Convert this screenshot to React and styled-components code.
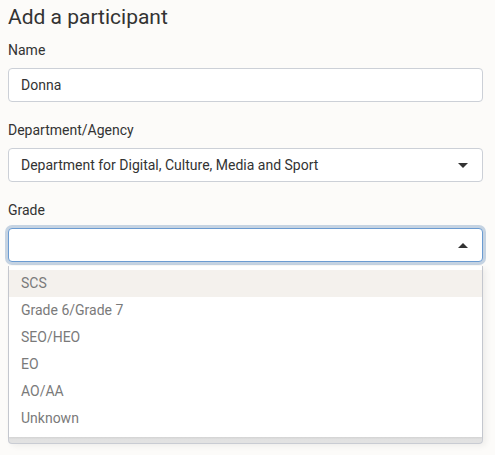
import React from "react";
import styled, { createGlobalStyle } from "styled-components";

const GlobalStyle = createGlobalStyle`
  html, body {
    margin: 0;
    background: #fcfbf9;
    font-family: Roboto, "Liberation Sans", sans-serif;
    color: #333;
  }
`;

const grades = ["SCS", "Grade 6/Grade 7", "SEO/HEO", "EO", "AO/AA", "Unknown"];

const Page = styled.div`
  padding: 2px 12px 10px 8px;
  width: 475px;
`;

const Title = styled.h1`
  margin: 0 0 9px;
  font-size: 21px;
  font-weight: 400;
  line-height: 30px;
  color: #333;
`;

const Field = styled.div`
  display: flex;
  flex-direction: column;
  margin-bottom: 19px;
`;

const Label = styled.label`
  font-size: 14px;
  line-height: 18px;
  margin-bottom: 9px;
  color: #333;
`;

const Box = styled.div`
  display: flex;
  align-items: center;
  justify-content: space-between;
  height: 34px;
  box-sizing: border-box;
  padding: 0 14px 0 12px;
  background: #fff;
  border: 1px solid ${({ $focused }) => ($focused ? "#6b9bd1" : "#ccd0d7")};
  border-radius: 4px;
  font-size: 14px;
  color: #333;
  box-shadow: ${({ $focused }) => ($focused ? "0 0 0 3px #c5d3e2" : "none")};
`;

const Caret = styled.span`
  width: 0;
  height: 0;
  border-left: 5px solid transparent;
  border-right: 5px solid transparent;
  ${({ $up }) =>
    $up ? "border-bottom: 5px solid #333;" : "border-top: 5px solid #333;"}
`;

const MenuFrame = styled.div`
  margin-top: 4px;
  border: 1px solid #c9ccd3;
  border-top: none;
  border-radius: 0 0 4px 4px;
  background: linear-gradient(#d6d6d6, #e2e2e2);
  padding-bottom: 6px;
  box-shadow: 3px 2px 6px rgba(0, 0, 0, 0.06);
`;

const Menu = styled.ul`
  list-style: none;
  margin: 0;
  padding: 4px 0 5px;
  background: #fff;
  box-shadow: 0 1px 2px rgba(0, 0, 0, 0.08);
`;

const Option = styled.li`
  height: 27px;
  line-height: 27px;
  padding-left: 12px;
  font-size: 14px;
  color: #7a7a7a;
  background: ${({ $active }) => ($active ? "#f4f1ed" : "transparent")};
`;

export default function App() {
  return (
    <Page>
      <GlobalStyle />
      <Title>Add a participant</Title>
      <Field>
        <Label>Name</Label>
        <Box>Donna</Box>
      </Field>
      <Field>
        <Label>Department/Agency</Label>
        <Box>
          Department for Digital, Culture, Media and Sport
          <Caret />
        </Box>
      </Field>
      <Field>
        <Label>Grade</Label>
        <Box $focused>
          <span />
          <Caret $up />
        </Box>
        <MenuFrame>
          <Menu>
            {grades.map((g, i) => (
              <Option key={g} $active={i === 0}>
                {g}
              </Option>
            ))}
          </Menu>
        </MenuFrame>
      </Field>
    </Page>
  );
}
